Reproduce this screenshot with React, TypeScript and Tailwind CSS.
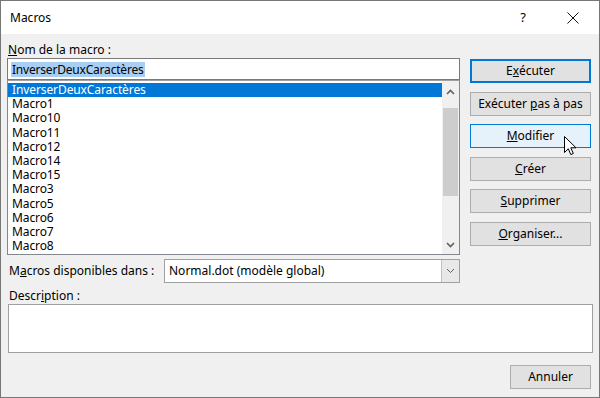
import React from "react";

const MACROS = [
  "InverserDeuxCaractères",
  "Macro1",
  "Macro10",
  "Macro11",
  "Macro12",
  "Macro14",
  "Macro15",
  "Macro3",
  "Macro5",
  "Macro6",
  "Macro7",
  "Macro8",
];

const font = { fontFamily: '"Noto Sans", "Open Sans", sans-serif' };

type BtnProps = {
  children: React.ReactNode;
  variant?: "default" | "focus" | "hover";
};

function Button({ children, variant }: BtnProps) {
  const look =
    variant === "focus"
      ? "border-2 border-[#0078d7] bg-[#e1e1e1]"
      : variant === "hover"
        ? "border border-[#0078d7] bg-[#e5f1fb]"
        : "border border-[#adadad] bg-[#e1e1e1]";
  return (
    <div
      className={`flex h-6 w-[121px] items-center justify-center text-[12px] text-black ${look}`}
    >
      {children}
    </div>
  );
}

function Chevron({ up, thin }: { up?: boolean; thin?: boolean }) {
  return (
    <svg width="9" height="6" viewBox="0 0 9 6">
      <path
        d={up ? "M1 5 L4.5 1.5 L8 5" : "M1 1 L4.5 4.5 L8 1"}
        fill="none"
        stroke="#606060"
        strokeWidth={thin ? 1 : 1.6}
      />
    </svg>
  );
}

export default function App() {
  return (
    <div
      className="relative flex h-[398px] w-[600px] flex-col border border-[#777] bg-[#f0f0f0] text-black"
      style={font}
    >
      {/* title bar */}
      <div className="flex h-[33px] shrink-0 items-center bg-white">
        <span className="pl-[9px] text-[12px]">Macros</span>
        <span className="ml-auto mr-[41px] text-[13px]">?</span>
        <svg className="mr-[20px]" width="12" height="12" viewBox="0 0 12 12">
          <path d="M0.5 0.5 L11.5 11.5 M11.5 0.5 L0.5 11.5" stroke="#111" strokeWidth="1" />
        </svg>
      </div>

      <div className="flex flex-1 flex-col px-[6px]">
        <div className="flex gap-[10px]">
          {/* left column */}
          <div className="flex w-[453px] flex-col">
            <div className="mt-[8px] h-4 pl-[1px] text-[12px] leading-4">
              <span className="underline">N</span>om de la macro :
            </div>
            <div className="flex h-[22px] items-center border border-[#7a7a7a] bg-white pl-[3px] text-[12px]">
              <span className="bg-[#a8cff3] px-[1px] leading-[15px] tracking-[-0.2px]">
                InverserDeuxCaractères
              </span>
            </div>
            <div className="flex h-[175px] border border-[#828790] border-t-[#a0a0a0] bg-white">
              <div className="flex-1 pt-[2px]">
                {MACROS.map((m, i) => (
                  <div
                    key={m}
                    className={`flex h-[14.2px] items-center pl-[4px] text-[12px] leading-[14px] tracking-[-0.1px] ${
                      i === 0 ? "bg-[#0078d7] text-white" : ""
                    }`}
                  >
                    {m}
                  </div>
                ))}
              </div>
              <div className="flex w-[17px] flex-col bg-[#f0f0f0]">
                <div className="flex h-[17px] items-center justify-center pt-[4px]">
                  <Chevron up />
                </div>
                <div className="mx-[1px] mt-[10px] h-[88px] bg-[#cdcdcd]" />
                <div className="mt-auto flex h-[17px] items-center justify-center pb-[2px]">
                  <Chevron />
                </div>
              </div>
            </div>
            <div className="mt-[4px] flex h-6 items-center">
              <span className="w-[157px] pl-[2px] text-[12px]">
                M<span className="underline">a</span>cros disponibles dans :
              </span>
              <div className="flex h-6 flex-1 items-stretch border border-[#a0a0a0] bg-white">
                <span className="flex flex-1 items-center pl-[4px] text-[12px]">
                  Normal.dot (modèle global)
                </span>
                <div className="flex w-[18px] items-center justify-center border-l border-[#c0c0c0] bg-[#e8e8e8]">
                  <Chevron thin />
                </div>
              </div>
            </div>
          </div>

          {/* right column */}
          <div className="mt-[25px] flex flex-col gap-[8.6px]">
            <Button variant="focus">
              <span>
                E<span className="underline">x</span>écuter
              </span>
            </Button>
            <Button>
              <span>
                Exécuter <span className="underline">p</span>as à pas
              </span>
            </Button>
            <Button variant="hover">
              <span>
                <span className="underline">M</span>odifier
              </span>
            </Button>
            <Button>
              <span>
                <span className="underline">C</span>réer
              </span>
            </Button>
            <Button>
              <span>
                <span className="underline">S</span>upprimer
              </span>
            </Button>
            <Button>
              <span>
                <span className="underline">O</span>rganiser...
              </span>
            </Button>
          </div>
        </div>

        <div className="mt-[5px] h-4 pl-[2px] text-[12px] leading-4">
          Descr<span className="underline">i</span>ption :
        </div>
        <div className="ml-[1px] h-[49px] w-[585px] border border-[#a0a0a0] bg-white" />

        <div className="mt-[12px] flex justify-end pr-[2px]">
          <div className="flex h-6 w-[81px] items-center justify-center border border-[#adadad] bg-[#e1e1e1] text-[12px]">
            Annuler
          </div>
        </div>
      </div>

      {/* mouse cursor over Modifier */}
      <svg
        className="absolute left-[563px] top-[135px]"
        width="14"
        height="21"
        viewBox="0 0 14 21"
      >
        <path
          d="M0.5 0.5 L0.5 16.5 L4.3 12.8 L6.8 18.6 L9.3 17.5 L6.8 11.8 L12 11.8 Z"
          fill="#fff"
          stroke="#000"
          strokeWidth="1"
          strokeLinejoin="round"
        />
      </svg>
    </div>
  );
}
